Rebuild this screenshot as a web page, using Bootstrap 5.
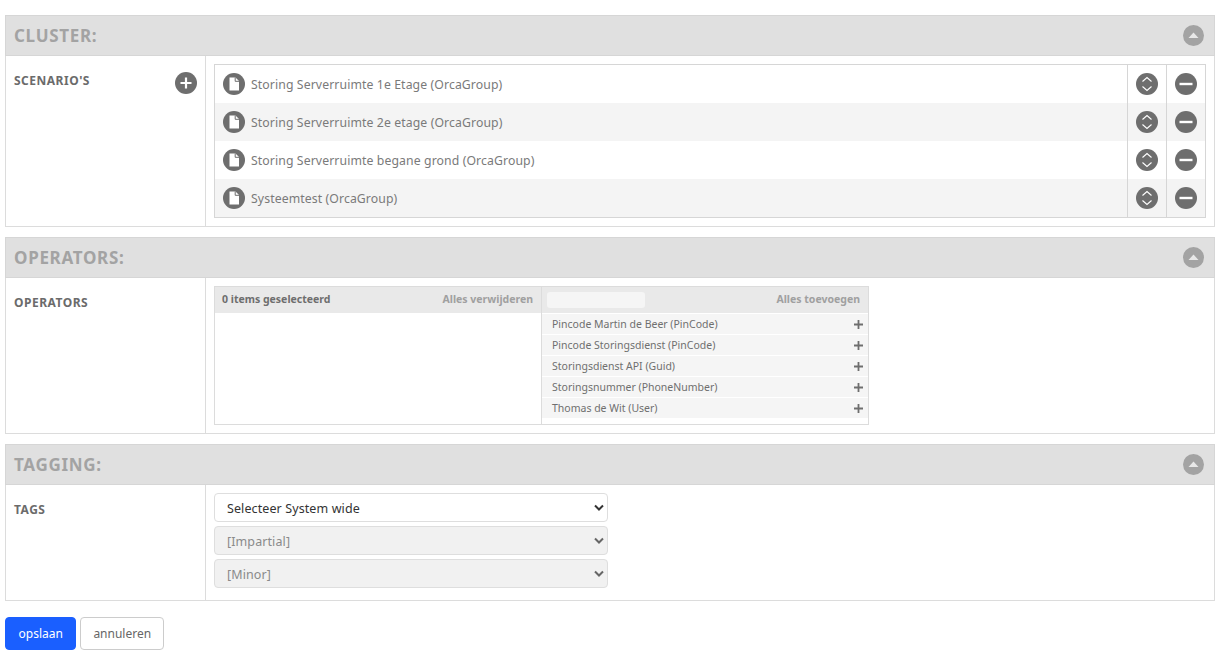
<!DOCTYPE html>
<html lang="nl">
<head>
<meta charset="utf-8">
<title>Cluster</title>
<link href="https://cdn.jsdelivr.net/npm/bootstrap@5.3.0/dist/css/bootstrap.min.css" rel="stylesheet">
<style>
html,body{height:659px;overflow:hidden}
body{font-family:"Noto Sans","Open Sans",sans-serif;font-size:13px;color:#6e6e6e;background:#fff;padding:15px 5px 0}
.sect{margin-bottom:10px;border:1px solid #dcdcdc;border-top:0}
.sect-head{height:41px;margin:0 -1px;background:#e0e0e0;border:1px solid #d6d6d6;padding:0 10px 0 8px;display:flex;align-items:center;justify-content:space-between}
.sect-head h2{margin:0;padding-top:2px;font-size:17px;font-weight:700;color:#a3a3a3;letter-spacing:.7px;font-family:"Noto Sans",sans-serif}
.sect-body{display:flex}
.tall-a{height:170px}
.tall-b{height:155px}
.tall-c{height:115px}
.lab-col{width:200px;flex:none;border-right:1px solid #dcdcdc;padding:17px 8px 0 8px;display:flex;justify-content:space-between;align-items:flex-start}
.lab-col b{font-size:12px;color:#6b6b6b;line-height:16px;font-weight:700;letter-spacing:.5px}
.add-ic{margin-top:-1px}
.val-col{flex:1;padding:8px}
.scen-list{border:1px solid #d6d6d6}
.scen-row{height:38px;display:flex;align-items:center}
.scen-row:nth-child(even){background:#f4f4f4}
.scen-name{flex:1;display:flex;align-items:center;gap:6px;padding-left:8px;font-size:12.25px;letter-spacing:.1px;color:#7a7a7a}
.scen-name span{padding-top:2px}
.scen-act{width:39px;height:100%;border-left:1px solid #d6d6d6;display:flex;align-items:center;justify-content:center}
.ops{width:655px;height:139px;border:1px solid #dcdcdc;display:flex}
.ops-l{width:327px;border-right:1px solid #dcdcdc}
.ops-r{flex:1}
.ops-bar{height:26px;background:#e9e9e9;display:flex;align-items:center;justify-content:space-between;padding:0 8px 0 7px;font-size:10.5px;font-weight:700;color:#a0a0a0}
.ops-bar .dark{color:#6e6e6e}
.ops-r .ops-bar{padding:0 8px 0 5px;margin-bottom:1px}
.ops-search{width:98px;height:16px;border:0;border-radius:3px;background:#f5f5f5;padding:0}
.ops-item{height:20px;margin-bottom:1px;background:#f5f5f5;display:flex;align-items:center;justify-content:space-between;padding:0 5px 0 10px;font-size:10.5px;color:#6f6f6f}
.ops-item svg{margin-top:1px}
.ops-item span{padding-top:2px}
.tag-sel{width:394px;height:29px;font-size:12.5px;letter-spacing:.1px;padding:3px 12px 0;margin-bottom:4px;color:#333;border-color:#dedede;border-radius:4px;background-image:url("data:image/svg+xml,%3csvg xmlns='http://www.w3.org/2000/svg' viewBox='0 0 10 7'%3e%3cpath d='M1 1.500 5 5.500l4-4' fill='none' stroke='%23333' stroke-width='2'/%3e%3c/svg%3e");background-size:10px 7px;background-position:right 3px center}
.tag-sel:disabled{background-color:#f1f1f1;color:#8a8a8a;background-image:url("data:image/svg+xml,%3csvg xmlns='http://www.w3.org/2000/svg' viewBox='0 0 10 7'%3e%3cpath d='M1 1.500 5 5.500l4-4' fill='none' stroke='%23666' stroke-width='2'/%3e%3c/svg%3e")}
.tag-sel:last-child{margin-bottom:0}
.actions{margin-top:16px;display:flex;gap:4px}
.btn-x{font-size:12px;height:33px;padding:0 12.5px;border-radius:4px}
.btn-z{background:#1a5fff;border-color:#1a5fff}
.btn-y{color:#666;border-color:#ccc;background:#fff;padding:0 12px}
</style>
</head>
<body>
<section class="sect">
  <div class="sect-head"><h2>CLUSTER:</h2><svg width="21" height="21" viewBox="0 0 21 21"><circle cx="10.500" cy="10.500" r="10.500" fill="#a3a3a3"/><path d="M5.500 13 10.500 7.500 15.500 13Z" fill="#e8e8e8"/></svg></div>
  <div class="sect-body tall-a">
    <div class="lab-col"><b>SCENARIO'S</b><svg class="add-ic" width="22" height="22" viewBox="0 0 22 22"><circle cx="11" cy="11" r="11" fill="#6e6e6e"/><path d="M11 5.500v11M5.500 11h11" stroke="#fff" stroke-width="2.200"/></svg></div>
    <div class="val-col">
      <div class="scen-list">
        <div class="scen-row"><div class="scen-name"><svg width="22" height="22" viewBox="0 0 22 22"><circle cx="11" cy="11" r="11" fill="#6e6e6e"/><path d="M6.500 4.500h6l3.500 3.500v9.500H6.500Z" fill="#fff"/><path d="M12.200 4.500V8.300H16" fill="none" stroke="#6e6e6e"/></svg><span>Storing Serverruimte 1e Etage (OrcaGroup)</span></div><div class="scen-act"><svg width="22" height="22" viewBox="0 0 22 22"><circle cx="11" cy="11" r="11" fill="#6e6e6e"/><path d="M6.500 8.500 11 4.500l4.500 4M6.500 13.500 11 17.500l4.500-4" fill="none" stroke="#fff" stroke-width="1.100"/></svg></div><div class="scen-act"><svg width="22" height="22" viewBox="0 0 22 22"><circle cx="11" cy="11" r="11" fill="#6e6e6e"/><path d="M4.500 11h13" stroke="#fff" stroke-width="2.400"/></svg></div></div>
        <div class="scen-row"><div class="scen-name"><svg width="22" height="22" viewBox="0 0 22 22"><circle cx="11" cy="11" r="11" fill="#6e6e6e"/><path d="M6.500 4.500h6l3.500 3.500v9.500H6.500Z" fill="#fff"/><path d="M12.200 4.500V8.300H16" fill="none" stroke="#6e6e6e"/></svg><span>Storing Serverruimte 2e etage (OrcaGroup)</span></div><div class="scen-act"><svg width="22" height="22" viewBox="0 0 22 22"><circle cx="11" cy="11" r="11" fill="#6e6e6e"/><path d="M6.500 8.500 11 4.500l4.500 4M6.500 13.500 11 17.500l4.500-4" fill="none" stroke="#fff" stroke-width="1.100"/></svg></div><div class="scen-act"><svg width="22" height="22" viewBox="0 0 22 22"><circle cx="11" cy="11" r="11" fill="#6e6e6e"/><path d="M4.500 11h13" stroke="#fff" stroke-width="2.400"/></svg></div></div>
        <div class="scen-row"><div class="scen-name"><svg width="22" height="22" viewBox="0 0 22 22"><circle cx="11" cy="11" r="11" fill="#6e6e6e"/><path d="M6.500 4.500h6l3.500 3.500v9.500H6.500Z" fill="#fff"/><path d="M12.200 4.500V8.300H16" fill="none" stroke="#6e6e6e"/></svg><span>Storing Serverruimte begane grond (OrcaGroup)</span></div><div class="scen-act"><svg width="22" height="22" viewBox="0 0 22 22"><circle cx="11" cy="11" r="11" fill="#6e6e6e"/><path d="M6.500 8.500 11 4.500l4.500 4M6.500 13.500 11 17.500l4.500-4" fill="none" stroke="#fff" stroke-width="1.100"/></svg></div><div class="scen-act"><svg width="22" height="22" viewBox="0 0 22 22"><circle cx="11" cy="11" r="11" fill="#6e6e6e"/><path d="M4.500 11h13" stroke="#fff" stroke-width="2.400"/></svg></div></div>
        <div class="scen-row"><div class="scen-name"><svg width="22" height="22" viewBox="0 0 22 22"><circle cx="11" cy="11" r="11" fill="#6e6e6e"/><path d="M6.500 4.500h6l3.500 3.500v9.500H6.500Z" fill="#fff"/><path d="M12.200 4.500V8.300H16" fill="none" stroke="#6e6e6e"/></svg><span>Systeemtest (OrcaGroup)</span></div><div class="scen-act"><svg width="22" height="22" viewBox="0 0 22 22"><circle cx="11" cy="11" r="11" fill="#6e6e6e"/><path d="M6.500 8.500 11 4.500l4.500 4M6.500 13.500 11 17.500l4.500-4" fill="none" stroke="#fff" stroke-width="1.100"/></svg></div><div class="scen-act"><svg width="22" height="22" viewBox="0 0 22 22"><circle cx="11" cy="11" r="11" fill="#6e6e6e"/><path d="M4.500 11h13" stroke="#fff" stroke-width="2.400"/></svg></div></div>
      </div>
    </div>
  </div>
</section>
<section class="sect">
  <div class="sect-head"><h2>OPERATORS:</h2><svg width="21" height="21" viewBox="0 0 21 21"><circle cx="10.500" cy="10.500" r="10.500" fill="#a3a3a3"/><path d="M5.500 13 10.500 7.500 15.500 13Z" fill="#e8e8e8"/></svg></div>
  <div class="sect-body tall-b">
    <div class="lab-col"><b>OPERATORS</b></div>
    <div class="val-col">
      <div class="ops">
        <div class="ops-l"><div class="ops-bar"><span class="dark">0 items geselecteerd</span><span>Alles verwijderen</span></div></div>
        <div class="ops-r">
          <div class="ops-bar"><input class="ops-search" type="text" aria-label="Zoeken"><span>Alles toevoegen</span></div>
          <div class="ops-item"><span>Pincode Martin de Beer (PinCode)</span><svg width="9" height="9" viewBox="0 0 9 9"><path d="M4.500 0v9M0 4.500h9" stroke="#6e6e6e" stroke-width="1.800"/></svg></div>
          <div class="ops-item"><span>Pincode Storingsdienst (PinCode)</span><svg width="9" height="9" viewBox="0 0 9 9"><path d="M4.500 0v9M0 4.500h9" stroke="#6e6e6e" stroke-width="1.800"/></svg></div>
          <div class="ops-item"><span>Storingsdienst API (Guid)</span><svg width="9" height="9" viewBox="0 0 9 9"><path d="M4.500 0v9M0 4.500h9" stroke="#6e6e6e" stroke-width="1.800"/></svg></div>
          <div class="ops-item"><span>Storingsnummer (PhoneNumber)</span><svg width="9" height="9" viewBox="0 0 9 9"><path d="M4.500 0v9M0 4.500h9" stroke="#6e6e6e" stroke-width="1.800"/></svg></div>
          <div class="ops-item"><span>Thomas de Wit (User)</span><svg width="9" height="9" viewBox="0 0 9 9"><path d="M4.500 0v9M0 4.500h9" stroke="#6e6e6e" stroke-width="1.800"/></svg></div>
        </div>
      </div>
    </div>
  </div>
</section>
<section class="sect">
  <div class="sect-head"><h2>TAGGING:</h2><svg width="21" height="21" viewBox="0 0 21 21"><circle cx="10.500" cy="10.500" r="10.500" fill="#a3a3a3"/><path d="M5.500 13 10.500 7.500 15.500 13Z" fill="#e8e8e8"/></svg></div>
  <div class="sect-body tall-c">
    <div class="lab-col"><b>TAGS</b></div>
    <div class="val-col">
      <select class="form-select tag-sel" aria-label="Selecteer"><option>Selecteer System wide</option></select>
      <select class="form-select tag-sel" disabled aria-label="Impartial"><option>[Impartial]</option></select>
      <select class="form-select tag-sel" disabled aria-label="Minor"><option>[Minor]</option></select>
    </div>
  </div>
</section>
<div class="actions">
  <button type="button" class="btn btn-primary btn-x btn-z">opslaan</button>
  <button type="button" class="btn btn-y btn-x">annuleren</button>
</div>
<script src="https://cdn.jsdelivr.net/npm/bootstrap@5.3.0/dist/js/bootstrap.bundle.min.js"></script>
</body>
</html>
